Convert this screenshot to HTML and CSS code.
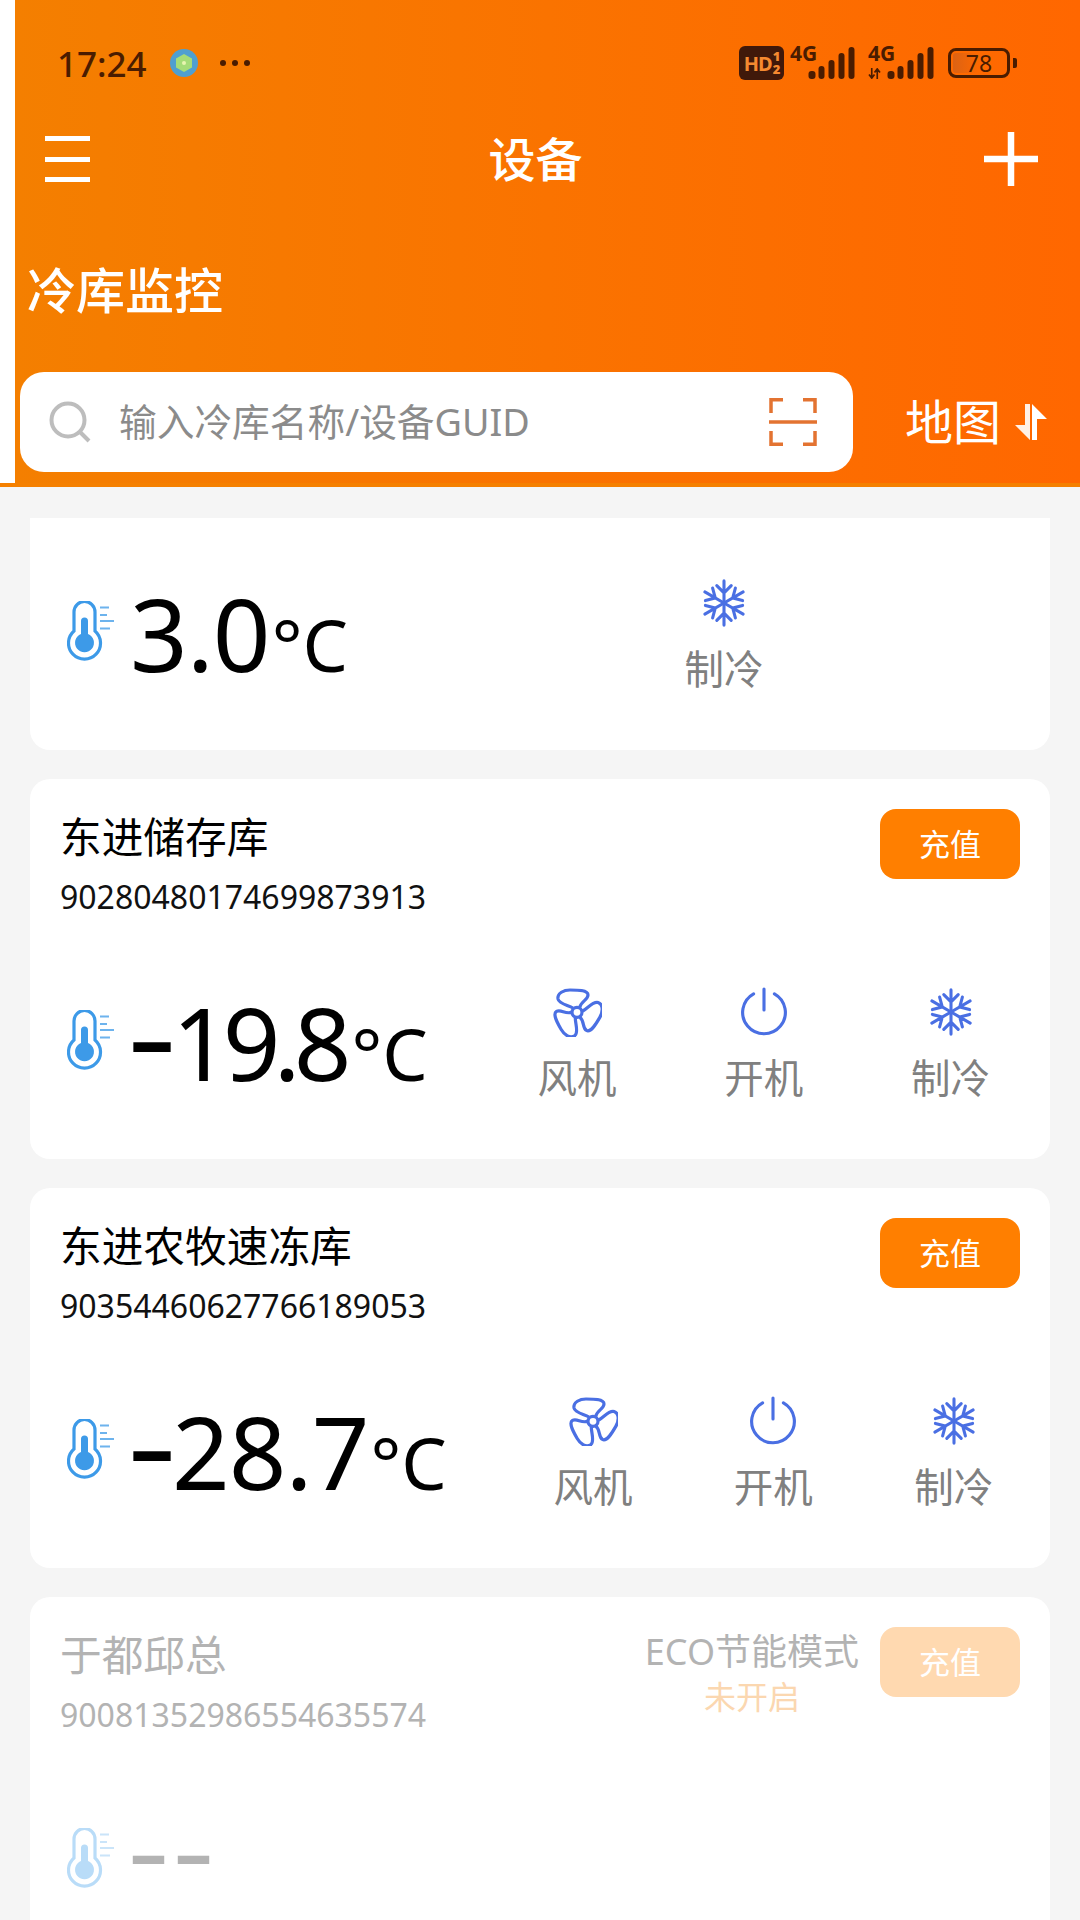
FILE: index.html
```html
<!DOCTYPE html>
<html lang="zh-CN">
<head>
<meta charset="utf-8">
<title>设备</title>
<link rel="stylesheet" href="styles.css">
</head>
<body>
<svg class="defs" width="0" height="0" aria-hidden="true">
  <defs>
    <symbol id="thermo" viewBox="0 0 48 60">
      <path d="M7 30V11a10.500 10.500 0 0 1 21 0v19a16 16 0 1 1-21 0z" fill="none" stroke="currentColor" stroke-width="3.200"/>
      <path d="M14 33V20a3.500 3.500 0 0 1 7 0v13a9.500 9.500 0 1 1-7 0z" fill="currentColor"/>
      <path d="M33 6.500h9M33 14h7M33 20h14M33 27.500h10" stroke="currentColor" stroke-width="2.200" opacity=".75"/>
    </symbol>
    <symbol id="fan" viewBox="-1 -3 50 50">
      <g fill="none" stroke="currentColor" stroke-width="3.200" stroke-linejoin="round">
        <path d="M20 18C15 15 6 14 5 9 4 3 11 0 17 0c7 0 18 0 18 5 0 5-7 6-8.300 12.500"/>
        <path d="M20 18C15 15 6 14 5 9 4 3 11 0 17 0c7 0 18 0 18 5 0 5-7 6-8.300 12.500" transform="rotate(120 24 22.300)"/>
        <path d="M20 18C15 15 6 14 5 9 4 3 11 0 17 0c7 0 18 0 18 5 0 5-7 6-8.300 12.500" transform="rotate(240 24 22.300)"/>
        <circle cx="24" cy="22.300" r="5"/>
      </g>
    </symbol>
    <symbol id="power" viewBox="0 0 48 48">
      <g fill="none" stroke="currentColor" stroke-width="3" stroke-linecap="round">
        <path d="M14 6.500a20.500 20.500 0 1 0 20 0"/>
        <path d="M24 2v20"/>
      </g>
    </symbol>
    <symbol id="snow" viewBox="-2 -2 52 52">
      <g fill="none" stroke="currentColor" stroke-width="3.200" stroke-linecap="round" stroke-linejoin="round">
        <path d="M24 24V1M16.500 6l7.500 7.500L31.500 6"/>
        <path d="M24 24V1M16.500 6l7.500 7.500L31.500 6" transform="rotate(60 24 24)"/>
        <path d="M24 24V1M16.500 6l7.500 7.500L31.500 6" transform="rotate(120 24 24)"/>
        <path d="M24 24V1M16.500 6l7.500 7.500L31.500 6" transform="rotate(180 24 24)"/>
        <path d="M24 24V1M16.500 6l7.500 7.500L31.500 6" transform="rotate(240 24 24)"/>
        <path d="M24 24V1M16.500 6l7.500 7.500L31.500 6" transform="rotate(300 24 24)"/>
      </g>
    </symbol>
    <symbol id="bars" viewBox="0 0 46 32">
      <g fill="currentColor">
        <rect x="0" y="24" width="7" height="8" rx="3"/>
        <rect x="10" y="19" width="6" height="13" rx="3"/>
        <rect x="20" y="13" width="6" height="19" rx="3"/>
        <rect x="30" y="6" width="6" height="26" rx="3"/>
        <rect x="40" y="0" width="6" height="32" rx="3"/>
      </g>
    </symbol>
  </defs>
</svg>

<header class="header">
  <div class="header-inner">
    <div class="status">
      <div class="status-left">
        <span class="clock">17:24</span>
        <svg class="app-dot" viewBox="0 0 28 28"><circle cx="14" cy="14" r="14" fill="#4f9fd0"/><path d="M14 5l8 4.500v9L14 23l-8-4.500v-9z" fill="#a5dc78"/><circle cx="14" cy="14" r="2" fill="#e8f5b0"/></svg>
        <span class="more"><i></i><i></i><i></i></span>
      </div>
      <div class="status-right">
        <span class="hd">HD<span class="hd-sims"><b>1</b><b>2</b></span></span>
        <span class="net">
          <span class="net-label">4G</span>
          <svg class="net-bars"><use href="#bars"/></svg>
        </span>
        <span class="net">
          <span class="net-label">4G</span>
          <svg class="net-arrows" viewBox="0 0 14 12"><path d="M4 0v11M1 7l3 4 3-4M10 12V1M7 5l3-4 3 4" fill="none" stroke="currentColor" stroke-width="1.800"/></svg>
          <svg class="net-bars"><use href="#bars"/></svg>
        </span>
        <span class="battery"><span class="battery-fill"></span><span class="battery-num">78</span></span>
        <span class="battery-nub"></span>
      </div>
    </div>

    <nav class="nav">
      <button class="menu" type="button" aria-label="菜单"><i></i><i></i><i></i></button>
      <h1 class="nav-title">设备</h1>
      <svg class="plus" viewBox="0 0 54 54"><path d="M27 0v54M0 27h54" stroke="#fff" stroke-width="6.500"/></svg>
    </nav>

    <h2 class="page-title">冷库监控</h2>

    <div class="search-row">
      <div class="search">
        <svg class="search-icon" viewBox="0 0 42 42"><circle cx="19" cy="19" r="16.500" fill="none" stroke="#bdbdbd" stroke-width="4"/><path d="M31 31l9 9" stroke="#bdbdbd" stroke-width="4"/></svg>
        <span class="search-text">输入冷库名称/设备GUID</span>
        <svg class="scan-icon" viewBox="0 0 48 48"><path d="M14 1.800H2V15M34 1.800h12V15M14 46.200H2V33M34 46.200h12V33" fill="none" stroke="#e37331" stroke-width="3.500"/><path d="M0 24h48" stroke="#e37331" stroke-width="3.500"/></svg>
      </div>
      <div class="map-toggle">
        <span>地图</span>
        <svg class="map-arrows" viewBox="0 0 32 36"><path d="M10 0h5v36L0 21h10z" fill="#fff" opacity=".9"/><path d="M22 36h-5V0l15 15H22z" fill="#fff"/></svg>
      </div>
    </div>
  </div>
</header>

<main class="list">
  <section class="card card-cut">
    <div class="card-body">
      <svg class="thermo"><use href="#thermo"/></svg>
      <div class="temp"><span class="temp-value">3.0</span><span class="temp-unit">°C</span></div>
      <div class="controls">
        <div class="control"><svg class="control-icon"><use href="#snow"/></svg><span>制冷</span></div>
      </div>
    </div>
  </section>

  <section class="card">
    <div class="card-head">
      <div class="device">
        <div class="device-name">东进储存库</div>
        <div class="device-guid">90280480174699873913</div>
      </div>
      <button class="recharge" type="button">充值</button>
    </div>
    <div class="card-body">
      <svg class="thermo"><use href="#thermo"/></svg>
      <div class="temp"><span class="temp-sign">–</span><span class="temp-value temp-value-tight">19.8</span><span class="temp-unit">°C</span></div>
      <div class="controls">
        <div class="control"><svg class="control-icon"><use href="#fan"/></svg><span>风机</span></div>
        <div class="control"><svg class="control-icon"><use href="#power"/></svg><span>开机</span></div>
        <div class="control"><svg class="control-icon"><use href="#snow"/></svg><span>制冷</span></div>
      </div>
    </div>
  </section>

  <section class="card">
    <div class="card-head">
      <div class="device">
        <div class="device-name">东进农牧速冻库</div>
        <div class="device-guid">90354460627766189053</div>
      </div>
      <button class="recharge" type="button">充值</button>
    </div>
    <div class="card-body">
      <svg class="thermo"><use href="#thermo"/></svg>
      <div class="temp"><span class="temp-sign">–</span><span class="temp-value">28.7</span><span class="temp-unit">°C</span></div>
      <div class="controls">
        <div class="control"><svg class="control-icon"><use href="#fan"/></svg><span>风机</span></div>
        <div class="control"><svg class="control-icon"><use href="#power"/></svg><span>开机</span></div>
        <div class="control"><svg class="control-icon"><use href="#snow"/></svg><span>制冷</span></div>
      </div>
    </div>
  </section>

  <section class="card card-offline">
    <div class="card-head">
      <div class="device">
        <div class="device-name">于都邱总</div>
        <div class="device-guid">90081352986554635574</div>
      </div>
      <div class="eco">
        <div class="eco-label">ECO节能模式</div>
        <div class="eco-state">未开启</div>
      </div>
      <button class="recharge" type="button">充值</button>
    </div>
    <div class="card-body">
      <svg class="thermo"><use href="#thermo"/></svg>
      <div class="temp"><span class="temp-empty">––</span></div>
    </div>
  </section>
</main>
</body>
</html>
```

FILE: styles.css
```css
* { box-sizing: border-box; }

html, body {
  margin: 0;
  height: 1920px;
  overflow: hidden;
  background: #f5f5f5;
  font-family: "Noto Sans", "Noto Sans CJK SC", sans-serif;
}

.defs { position: absolute; }

/* Header */
.header {
  background: #fff;
  border-bottom: 4px solid #f58000;
}

.header-inner {
  margin-left: 15px;
  height: 483px;
  background: linear-gradient(90deg, #f47f00 0%, #fa7300 50%, #ff6700 100%);
  color: #fff;
}

.status {
  height: 126px;
  padding: 0 63px 0 42px;
  display: flex;
  align-items: center;
  justify-content: space-between;
  color: #4a1c00;
}

.status-left { display: flex; align-items: center; }

.clock { font-size: 35px; font-weight: 500; width: 113px; }

.app-dot { width: 28px; height: 28px; }

.more { display: flex; gap: 6px; margin-left: 22px; }
.more i { width: 6px; height: 6px; border-radius: 50%; background: #4a1c00; }

.status-right { display: flex; align-items: center; }

.hd {
  width: 45px;
  height: 34px;
  border-radius: 6px;
  background: #40190a;
  color: #f58a30;
  font-size: 20px;
  font-weight: 700;
  display: flex;
  align-items: center;
  justify-content: center;
  letter-spacing: -1px;
}

.hd-sims { display: flex; flex-direction: column; margin-left: 1px; }
.hd-sims b { font-size: 13px; line-height: 13px; }

.net {
  position: relative;
  width: 65px;
  height: 34px;
  margin-left: 6px;
  display: block;
}

.net + .net { margin-left: 13px; width: 66px; }

.net-label {
  position: absolute;
  left: 0;
  top: -4px;
  font-size: 21px;
  font-weight: 700;
  line-height: 22px;
}

.net-bars {
  position: absolute;
  right: 0;
  bottom: 1px;
  width: 47px;
  height: 32px;
}

.net-arrows {
  position: absolute;
  left: 0;
  bottom: 1px;
  width: 13px;
  height: 11px;
}

.battery {
  position: relative;
  width: 62px;
  height: 30px;
  margin-left: 14px;
  border: 3px solid #4a1c00;
  border-radius: 8px;
  display: flex;
  align-items: center;
  justify-content: center;
  overflow: hidden;
}

.battery-fill {
  position: absolute;
  left: 2px;
  top: 2px;
  bottom: 2px;
  width: 26px;
  border-radius: 3px;
  background: linear-gradient(90deg, #dc6214, rgba(220, 98, 20, 0));
}

.battery-num { position: relative; font-size: 23px; line-height: 24px; }

.battery-nub {
  width: 4px;
  height: 10px;
  margin-left: 3px;
  border-radius: 0 2px 2px 0;
  background: #4a1c00;
}

.nav {
  height: 66px;
  padding: 0 42px 0 30px;
  display: flex;
  align-items: center;
  justify-content: space-between;
}

.menu {
  width: 46px;
  height: 46px;
  padding: 0;
  border: 0;
  background: none;
  display: flex;
  flex-direction: column;
  justify-content: space-between;
}

.menu i { width: 45px; height: 5px; background: #fff; }

.nav-title { margin: 0 4px 0 0; font-size: 47px; line-height: 56px; font-weight: 500; }

.plus { width: 54px; height: 54px; }

.page-title {
  margin: 66px 0 0;
  padding-left: 12px;
  font-size: 49px;
  line-height: 64px;
  font-weight: 500;
}

.search-row {
  margin-top: 50px;
  padding-left: 5px;
  display: flex;
  align-items: center;
}

.search {
  width: 833px;
  height: 100px;
  padding: 0 36px 0 29px;
  border-radius: 24px;
  background: #fff;
  display: flex;
  align-items: center;
}

.search-icon { width: 42px; height: 42px; flex: none; }

.search-text {
  flex: 1;
  margin: -5px 0 0 28px;
  color: #8b8b8b;
  font-size: 37.700px;
  white-space: nowrap;
}

.scan-icon { width: 48px; height: 48px; flex: none; }

.map-toggle {
  margin-left: 52px;
  display: flex;
  align-items: center;
  font-size: 48px;
  line-height: 60px;
}

.map-arrows { width: 32px; height: 36px; margin-left: 14px; }

/* Device cards */
.list {
  height: 1433px;
  padding: 31px 30px 0;
  display: flex;
  flex-direction: column;
  gap: 29px;
  overflow: hidden;
}

.card {
  flex: none;
  height: 380px;
  border-radius: 20px;
  background: #fff;
}

.card-cut { height: 232px; border-radius: 0 0 20px 20px; }

.card-head {
  height: 148px;
  padding: 30px 30px 0 30px;
  display: flex;
  align-items: flex-start;
}

.device { flex: 1; }

.device-name { margin-top: -1px; font-size: 41.700px; line-height: 58px; color: #000; }

.device-guid {
  margin-top: 11px;
  font-size: 32px;
  line-height: 40px;
  color: #111;
}

.recharge {
  width: 140px;
  height: 70px;
  padding: 0 0 4px;
  border: 0;
  border-radius: 16px;
  background: #ff7f00;
  color: #fff;
  font: 400 31px "Noto Sans", "Noto Sans CJK SC", sans-serif;
}

.eco { margin-right: 21px; text-align: center; }
.eco-label { margin-top: 2px; font-size: 36px; line-height: 46px; color: #b3b3b3; }
.eco-state { margin-top: 2px; font-size: 32px; line-height: 40px; color: #fbd7b0; }

.card-body {
  height: 232px;
  padding: 0 6px 0 37px;
  display: flex;
  align-items: center;
}

.thermo {
  width: 48px;
  height: 60px;
  margin: -6px 15px 0 0;
  color: #3d9ae8;
  flex: none;
}

.temp {
  margin-top: 9px;
  display: flex;
  align-items: baseline;
  color: #000;
  white-space: nowrap;
}

.temp-value {
  font-size: 101px;
  line-height: 130px;
  letter-spacing: -1px;
}

.temp-value-tight { margin-right: 5px; letter-spacing: -7px; }

/* The sign is drawn shorter and heavier than the digits, at mid height */
.temp-sign {
  margin-right: -2px;
  font-size: 88px;
  line-height: 130px;
  font-weight: 700;
  transform: translateY(-10px);
}

.temp-unit { margin-left: 2px; font-size: 72px; line-height: 130px; }

.controls { flex: 1; margin: 2px 0 0 56px; display: flex; }

.control {
  flex: 1;
  display: flex;
  flex-direction: column;
  align-items: center;
  gap: 18px;
  color: #808080;
  font-size: 39.500px;
  line-height: 46px;
}

.control-icon { width: 50px; height: 50px; color: #4a6fe3; }

/* Offline device: everything washed out */
.card-offline .device-name,
.card-offline .device-guid { color: #b3b3b3; }
.card-offline .recharge { background: #ffd9b0; }
.card-offline .thermo { color: #b9dcf8; }
.temp-empty {
  margin-top: -28px;
  font-size: 74px;
  font-weight: 700;
  line-height: 100px;
  color: #b3b3b3;
  letter-spacing: 8px;
}
```
